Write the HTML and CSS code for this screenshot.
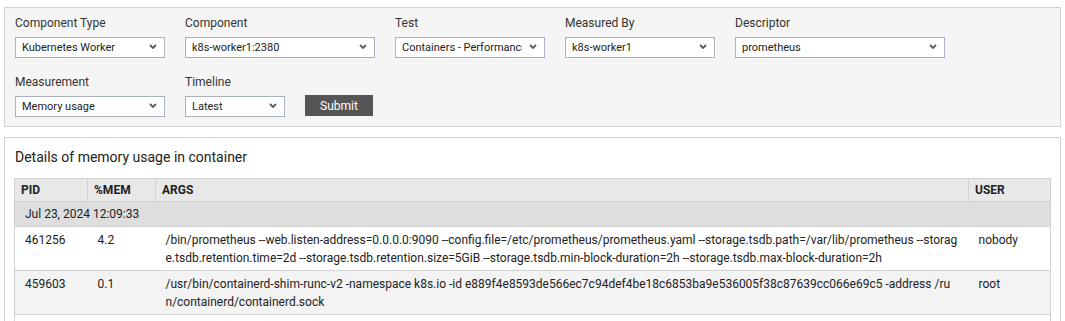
FILE: index.html
```html
<!DOCTYPE html>
<html lang="en">
<head>
    <meta charset="UTF-8">
    <meta name="viewport" content="width=device-width, initial-scale=1.0">
    <title>Detailed Diagnosis</title>
    <link rel="stylesheet" href="styles.css">
</head>
<body>
    <form class="filter-panel">
        <div class="filter-row">
            <div class="field">
                <label for="componentType">Component Type</label>
                <div class="select-wrap w150">
                    <select id="componentType"><option>Kubernetes Worker</option></select>
                    <svg class="chevron" width="8" height="5" viewBox="0 0 8 5"><polyline points="1,1 4,4 7,1"/></svg>
                </div>
            </div>
            <div class="field">
                <label for="component">Component</label>
                <div class="select-wrap w190">
                    <select id="component"><option>k8s-worker1:2380</option></select>
                    <svg class="chevron" width="8" height="5" viewBox="0 0 8 5"><polyline points="1,1 4,4 7,1"/></svg>
                </div>
            </div>
            <div class="field">
                <label for="test">Test</label>
                <div class="select-wrap w150">
                    <select id="test"><option>Containers - Performance</option></select>
                    <svg class="chevron" width="8" height="5" viewBox="0 0 8 5"><polyline points="1,1 4,4 7,1"/></svg>
                </div>
            </div>
            <div class="field">
                <label for="measuredBy">Measured By</label>
                <div class="select-wrap w150">
                    <select id="measuredBy"><option>k8s-worker1</option></select>
                    <svg class="chevron" width="8" height="5" viewBox="0 0 8 5"><polyline points="1,1 4,4 7,1"/></svg>
                </div>
            </div>
            <div class="field">
                <label for="descriptor">Descriptor</label>
                <div class="select-wrap w210">
                    <select id="descriptor"><option>prometheus</option></select>
                    <svg class="chevron" width="8" height="5" viewBox="0 0 8 5"><polyline points="1,1 4,4 7,1"/></svg>
                </div>
            </div>
        </div>
        <div class="filter-row">
            <div class="field">
                <label for="measurement">Measurement</label>
                <div class="select-wrap w150">
                    <select id="measurement"><option>Memory usage</option></select>
                    <svg class="chevron" width="8" height="5" viewBox="0 0 8 5"><polyline points="1,1 4,4 7,1"/></svg>
                </div>
            </div>
            <div class="field">
                <label for="timeline">Timeline</label>
                <div class="select-wrap w100">
                    <select id="timeline"><option>Latest</option></select>
                    <svg class="chevron" width="8" height="5" viewBox="0 0 8 5"><polyline points="1,1 4,4 7,1"/></svg>
                </div>
            </div>
            <button type="button" class="submit-btn">Submit</button>
        </div>
    </form>

    <div class="details-panel">
        <h3 class="details-title">Details of memory usage in container</h3>
        <table class="details-table">
            <colgroup>
                <col class="col-pid">
                <col class="col-mem">
                <col>
                <col class="col-user">
            </colgroup>
            <thead>
                <tr>
                    <th>PID</th>
                    <th>%MEM</th>
                    <th>ARGS</th>
                    <th>USER</th>
                </tr>
            </thead>
            <tbody>
                <tr class="time-row">
                    <td colspan="4">Jul 23, 2024 12:09:33</td>
                </tr>
                <tr>
                    <td>461256</td>
                    <td>4.2</td>
                    <td class="args">/bin/prometheus --web.listen-address=0.0.0.0:9090 --config.file=/etc/prometheus/prometheus.yaml --storage.tsdb.path=/var/lib/prometheus --storage.tsdb.retention.time=2d --storage.tsdb.retention.size=5GiB --storage.tsdb.min-block-duration=2h --storage.tsdb.max-block-duration=2h</td>
                    <td>nobody</td>
                </tr>
                <tr>
                    <td>459603</td>
                    <td>0.1</td>
                    <td class="args">/usr/bin/containerd-shim-runc-v2 -namespace k8s.io -id e889f4e8593de566ec7c94def4be18c6853ba9e536005f38c87639cc066e69c5 -address /run/containerd/containerd.sock</td>
                    <td>root</td>
                </tr>
                <tr class="empty-row">
                    <td></td>
                    <td></td>
                    <td></td>
                    <td></td>
                </tr>
            </tbody>
        </table>
    </div>
</body>
</html>
```

FILE: styles.css
```css
/* General */
html {
    overflow: hidden;
}

body {
    margin: 7px 4px 0;
    font-family: Roboto, "Liberation Sans", sans-serif;
    color: #222;
    background: #fff;
}

/* Filter panel */
.filter-panel {
    background: #f5f5f5;
    border: 1px solid #d2d2d2;
    padding: 7px 10px 10px;
    margin: 0 0 10px;
}

.filter-row {
    display: flex;
    align-items: flex-end;
    gap: 20px;
}

.filter-row + .filter-row {
    margin-top: 17px;
}

.field label {
    display: block;
    font-size: 12px;
    line-height: 16px;
    color: #333;
    margin-bottom: 5px;
}

.select-wrap {
    position: relative;
    height: 21px;
}

.select-wrap select {
    appearance: none;
    -webkit-appearance: none;
    box-sizing: border-box;
    width: 100%;
    height: 21px;
    margin: 0;
    padding: 0 22px 0 6px;
    border: 1px solid #a9b0be;
    border-radius: 0;
    background: #fff;
    font-family: inherit;
    font-size: 11px;
    color: #222;
    outline: none;
}

.w100 { width: 100px; }
.w150 { width: 150px; }
.w190 { width: 190px; }
.w210 { width: 210px; }

.chevron {
    position: absolute;
    right: 8px;
    top: 8px;
    fill: none;
    stroke: #5a5a5a;
    stroke-width: 1.8;
    pointer-events: none;
}

.submit-btn {
    width: 68px;
    height: 21px;
    padding: 0;
    border: none;
    border-radius: 0;
    background: #555;
    color: #fff;
    font-family: inherit;
    font-size: 12px;
    cursor: pointer;
}

/* Details panel */
.details-panel {
    background: #fff;
    border: 1px solid #d2d2d2;
    padding: 10px 9px 20px;
}

.details-title {
    margin: 0 0 12px;
    padding-left: 1px;
    font-size: 14px;
    line-height: 18px;
    font-weight: normal;
    color: #222;
}

.details-table {
    width: 100%;
    border-collapse: collapse;
    table-layout: fixed;
    border: 1px solid #d2d2d2;
    font-size: 12px;
}

.col-pid { width: 73px; }
.col-mem { width: 68px; }
.col-user { width: 82px; }

.details-table th {
    background: #e8e8e8;
    text-align: left;
    font-weight: bold;
    line-height: 22px;
    padding: 0 6px;
    border: 1px solid #d2d2d2;
}

.details-table td {
    vertical-align: top;
    line-height: 18px;
    padding: 4px 10px 3px;
    border-top: 1px solid #d2d2d2;
}

.details-table tbody tr:nth-child(odd) {
    background: #f3f3f3;
}

.details-table tbody tr:nth-child(even) {
    background: #fff;
}

.details-table .time-row td {
    background: #dedede;
    line-height: 24px;
    padding: 0 10px;
}

.details-table .empty-row td {
    height: 36px;
}

.details-table .args {
    word-break: break-all;
}
```
